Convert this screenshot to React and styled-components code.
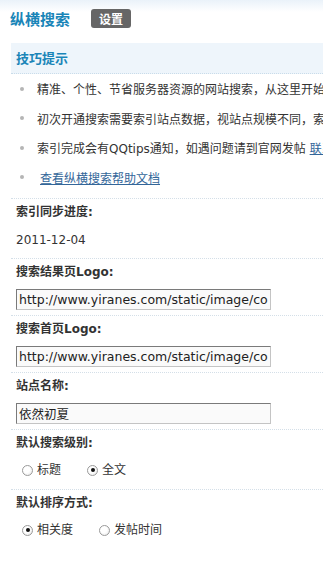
import styled, { createGlobalStyle } from "styled-components";

const GlobalStyle = createGlobalStyle`
  html, body {
    margin: 0;
    padding: 0;
  }
  body {
    background: linear-gradient(#eaf2f9 0px, #ffffff 12px) no-repeat #fff;
    font-family: "DejaVu Sans", "Noto Sans CJK SC", sans-serif;
    font-size: 12px;
    color: #333;
    overflow: hidden;
  }
`

const StyledPage = styled.div`
  width: 323px;
  height: 564px;
  overflow: hidden;
  padding-left: 11px;
  box-sizing: border-box;
`

const StyledHeader = styled.div`
  display: flex;
  align-items: center;
  height: 43px;
  padding-bottom: 6px;
  box-sizing: border-box;
  margin-left: -1px;
`

const StyledTitle = styled.h3`
  margin: 0;
  font-family: "Noto Sans CJK SC", sans-serif;
  font-size: 15px;
  font-weight: bold;
  color: #1a85b8;
`

const StyledBadge = styled.span`
  margin-left: 21px;
  width: 40px;
  height: 19px;
  line-height: 19px;
  text-align: center;
  background: #666;
  color: #fff;
  border-radius: 3px;
  font-family: "Noto Sans CJK SC", sans-serif;
  font-weight: bold;
  font-size: 12px;
`

const StyledTipsHead = styled.div`
  height: 30px;
  line-height: 30px;
  padding-left: 5px;
  background: #eef5fb;
  border-bottom: 1px dotted #c9dcea;
  font-family: "Noto Sans CJK SC", sans-serif;
  font-size: 13px;
  font-weight: bold;
  color: #1a85b8;
`

const StyledTipsList = styled.ul`
  list-style: none;
  margin: 0;
  padding: 0 0 6px 0;
  border-bottom: 1px dotted #d4dfe8;
`

const StyledTip = styled.li`
  display: flex;
  align-items: center;
  height: 29.5px;
  white-space: nowrap;
  padding-left: 9px;

  &::before {
    content: "";
    width: 4px;
    height: 4px;
    border-radius: 50%;
    background: #b5b5b5;
    margin-right: 13px;
    flex-shrink: 0;
  }
`

const StyledLink = styled.a`
  color: #336699;
  text-decoration: underline;
  margin-left: ${props => props.$indent ? "3px" : "0"};
`

const StyledLabel = styled.div`
  padding: 5px 0 5px 5px;
  line-height: 16px;
  font-weight: bold;
  color: #333;
`

const StyledValue = styled.div`
  padding: ${props => props.$pad || "4px 0 5px 5px"};
  line-height: 16px;
  border-bottom: ${props => props.$last ? "none" : "1px dotted #d4dfe8"};
  display: flex;
  align-items: center;
`

const StyledInput = styled.input`
  width: 255px;
  height: 21px;
  box-sizing: border-box;
  margin: 0;
  padding: 1px 2px;
  border: 1px solid #c4c4c4;
  border-top-color: #7a7a7a;
  border-left-color: #7a7a7a;
  background: #fafafa;
  font-family: "DejaVu Sans", "Noto Sans CJK SC", sans-serif;
  font-size: 12.5px;
  color: #222;
  outline: none;
`

const StyledRadioLabel = styled.label`
  display: flex;
  align-items: center;
  margin-left: 6px;
  margin-right: 20px;
  color: #333;
`

const StyledRadio = styled.span`
  width: 11px;
  height: 11px;
  box-sizing: border-box;
  border-radius: 50%;
  border: 1px solid #9a9a9a;
  background: radial-gradient(circle at 40% 40%, #fff 40%, #e4e4e4 100%);
  margin-right: 4px;
  display: flex;
  align-items: center;
  justify-content: center;

  &::after {
    content: "";
    width: 4px;
    height: 4px;
    border-radius: 50%;
    background: ${props => props.$checked ? "#111" : "transparent"};
  }
`

const tips = [
  "精准、个性、节省服务器资源的网站搜索，从这里开始",
  "初次开通搜索需要索引站点数据，视站点规模不同，索引需要一定时间",
]

const Radio = ({ checked, children }) => (
  <StyledRadioLabel>
    <StyledRadio $checked={checked} />
    {children}
  </StyledRadioLabel>
)

const App = () => {
  return (
    <StyledPage>
      <GlobalStyle />
      <StyledHeader>
        <StyledTitle>纵横搜索</StyledTitle>
        <StyledBadge>设置</StyledBadge>
      </StyledHeader>

      <StyledTipsHead>技巧提示</StyledTipsHead>
      <StyledTipsList>
        {tips.map(t => <StyledTip key={t}>{t}</StyledTip>)}
        <StyledTip>
          索引完成会有QQtips通知，如遇问题请到官网发帖&nbsp;<StyledLink href="#">联系我们</StyledLink>
        </StyledTip>
        <StyledTip>
          <StyledLink href="#" $indent>查看纵横搜索帮助文档</StyledLink>
        </StyledTip>
      </StyledTipsList>

      <StyledLabel>索引同步进度:</StyledLabel>
      <StyledValue $pad="7px 0 10px 5px">2011-12-04</StyledValue>

      <StyledLabel>搜索结果页Logo:</StyledLabel>
      <StyledValue>
        <StyledInput defaultValue="http://www.yiranes.com/static/image/common/logo.png" />
      </StyledValue>

      <StyledLabel>搜索首页Logo:</StyledLabel>
      <StyledValue>
        <StyledInput defaultValue="http://www.yiranes.com/static/image/common/logo.png" />
      </StyledValue>

      <StyledLabel>站点名称:</StyledLabel>
      <StyledValue>
        <StyledInput defaultValue="依然初夏" />
      </StyledValue>

      <StyledLabel>默认搜索级别:</StyledLabel>
      <StyledValue $pad="6px 0 11px 5px">
        <Radio>标题</Radio>
        <Radio checked>全文</Radio>
      </StyledValue>

      <StyledLabel>默认排序方式:</StyledLabel>
      <StyledValue $pad="6px 0 11px 5px" $last>
        <Radio checked>相关度</Radio>
        <Radio>发帖时间</Radio>
      </StyledValue>
    </StyledPage>
  );
};

export default App;
